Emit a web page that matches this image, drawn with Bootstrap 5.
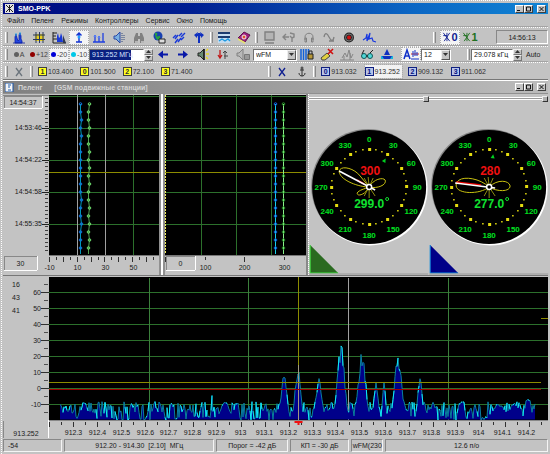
<!DOCTYPE html>
<html lang="ru">
<head>
<meta charset="utf-8">
<meta name="viewport" content="width=device-width, initial-scale=1">
<title>SMO-PPK</title>
<link rel="stylesheet" href="https://cdn.jsdelivr.net/npm/bootstrap@5.3.0/dist/css/bootstrap.min.css">
<style>
  body { font: 7px/9px "Liberation Sans", Arial, sans-serif; background: #c3c3c3; color: #202020; }
  .app { min-height: 100vh; padding: 3px 2px 2px 3px; background: #c3c3c3; position: relative; }
  .app::before { content: ""; position: absolute; inset: 0 0 0 1px; border-left: 1px dotted #fff; border-top: 1px dotted #fff; pointer-events: none; }
  .title { height: 11px; background: linear-gradient(90deg, #000a80 0%, #001f92 35%, #0b66c4 75%, #1084d4 100%); color: #fff; font-weight: 700; padding: 0 2px; }
  .child-title { height: 14px; background: linear-gradient(90deg, #808080, #bcbcbc); color: #d4d4d4; font-weight: 700; border-top: 1px solid #fff; border-bottom: 1px solid #909090; padding: 0 2px; }
  .wbtn { width: 9px; height: 8px; padding: 0; border: 1px solid; border-color: #fff #404040 #404040 #fff; background: #c3c3c3; display: flex; }
  .wbtn svg { width: 100%; height: 100%; }
  .menu { height: 13px; padding-left: 4px; gap: 7px; }
  .menu a { color: #202020; text-decoration: none; }
  .bar { border-top: 1px dotted #fff; box-shadow: 0 -1px #a4a4a4; padding-left: 1px; }
  .bar-a { height: 19px; } .bar-b { height: 16px; } .bar-c { height: 18px; border-bottom: 1px solid #777; }
  .grip { width: 3px; height: 11px; border-left: 1px solid #fff; border-right: 1px solid #888; margin: 0 1px; flex: none; }
  .tool { width: 20px; height: 15px; padding: 0; border: 0; background: none; flex: none; display: flex; align-items: center; justify-content: center; }
  .tool svg { width: 16px; height: 13px; }
  .pressed { background: #f4f4f4; border: 1px dotted #aaa; }
  .clock { width: 52px; height: 14px; border: 1px solid; border-color: #888 #fff #fff #888; }
  .att { width: 20px; height: 13px; gap: 1px; color: #444; flex: none; justify-content: center; }
  .att input { appearance: none; width: 5px; height: 5px; border-radius: 50%; margin: 0; flex: none; background: #606060; }
  .att .c-red { background: #900000; } .att .c-blue { background: #0000d8; } .att .c-cyan { background: #00c8e8; }
  .field { height: 12px; padding: 0 2px; border: 1px solid; border-color: #707070 #fff #fff #707070; background: #fff; color: #202020; font: inherit; border-radius: 0; min-width: 0; }
  .field.size { width: 30px; } .field.bw { width: 42px; } .auto { width: 26px; }
  .freq { width: 55px; background: linear-gradient(90deg, #0a2080 41px, #fff 41px); color: #d8e4ff; }
  .spin { width: 9px; height: 12px; flex: none; }
  .spin button { height: 6px; padding: 0; border: 1px solid; border-color: #eee #777 #777 #eee; background: #c3c3c3; display: flex; align-items: center; justify-content: center; }
  .spin svg { width: 5px; height: 3px; }
  .combo { width: 44px; appearance: none; background: #fff; }
  .combo-wrap { position: relative; }
  .combo-wrap .spin { position: absolute; right: 1px; top: 1px; pointer-events: none; height: 10px; background: #c3c3c3; border: 1px solid; border-color: #eee #555 #555 #eee; display: flex; align-items: center; justify-content: center; }
  .preset { border: 0; padding: 0 2px 0 0; height: 13px; color: #303030; background: none; gap: 1px; display: flex; align-items: center; flex: none; }
  .preset b { width: 9px; height: 9px; line-height: 7px; border: 1px solid #404040; text-align: center; background: #ffff20; }
  .preset.blue b { border-color: #102080; background: #b8c4e8; color: #001080; }
  .preset.on { background: #f2f2f2; outline: 1px dotted #aaa; }
  .slots { gap: 5px; } .slots-b { gap: 6px; }
  .right-bank { padding-right: 60px; }
  .tool .df-ico { width: 9px; height: 12px; flex: none; }
  .fs-df { font-size: 11px; }
  .text-df0 { color: #102090; } .text-df1 { color: #207020; }
  .work { flex: 1 1 0; }
  .upper { flex: 182 1 0; min-height: 182px; border-bottom: 1px solid #777; }
  .lower { flex: 162 1 0; min-height: 162px; }
  .scale { width: 46px; flex: none; }
  .plot { min-width: 0; flex-basis: 0; flex-shrink: 1; }
  .plot svg, .scale svg { display: block; width: 100%; height: 100%; overflow: visible; }
  .g-deg { flex-grow: 111; } .g-az { flex-grow: 142; } .g-dial { flex-grow: 240; }
  .split { width: 6px; flex: none; border-left: 2px solid #909090; border-right: 2px solid #909090; background: #fff; }
  .split-thin { width: 3px; flex: none; border-left: 2px solid #888; border-right: 1px dotted #fff; }
  .level { appearance: none; display: block; width: 100%; height: 9px; margin: 0; background: none; }
  .level::-webkit-slider-runnable-track { height: 3px; border-top: 1px solid #fff; border-bottom: 1px solid #fff; background: #999; }
  .level::-webkit-slider-thumb { appearance: none; width: 6px; height: 6px; margin-top: -2px; background: #b0b0b0; border: 1px solid; border-color: #eee #333 #333 #eee; }
  .dial { display: block; width: 100%; flex: 1 1 0; min-height: 0; }
  .status { height: 14px; gap: 2px; padding-top: 1px; }
  .status > div { border: 1px solid; border-color: #888 #f4f4f4 #f4f4f4 #888; flex-basis: 0; min-width: 0; text-align: center; overflow: hidden; white-space: nowrap; line-height: 11px; }
  .s-a { flex-grow: 55; } .s-b { flex-grow: 153; } .s-c { flex-grow: 72; } .s-d { flex-grow: 59; } .s-e { flex-grow: 31; } .s-f { flex-grow: 166; }
</style>
<script src="https://cdn.jsdelivr.net/npm/bootstrap@5.3.0/dist/js/bootstrap.bundle.min.js"></script>
</head>
<body>
<svg class="d-none" aria-hidden="true">
  <symbol id="i-spec" viewBox="0 0 16 13"><path d="M2 12h12M4 11V6l1-3 1 4 1 3 1-1V4l1-2 1 3v3l1 2v2H4z" fill="#2448e0" stroke="#0a20a8" stroke-width=".8"/><path d="M5 2v3M9 1v3" stroke="#28b0e8"/></symbol>
  <symbol id="i-grid" viewBox="0 0 16 13"><path d="M4 3h9v7H4z" fill="#e8d020"/><path d="M2 4h12M2 8.500h12M5 1v11M8.500 1v11M12 1v11" stroke="#283860"/></symbol>
  <symbol id="i-bars" viewBox="0 0 16 13"><path d="M2 1v11h13M2 2h4M2 5h3M2 8h4" stroke="#222" fill="none"/><path d="M6 11V5l1-3 1 5 1-1 1-4 1 3 1 6z" fill="#1838d8"/><path d="M12 12V4l3 8z" fill="#303850"/></symbol>
  <symbol id="i-up" viewBox="0 0 16 13"><path d="M8 2v9M5 11h6M5.500 4.500L8 2l2.500 2.500" stroke="#1030d0" stroke-width="1.400" fill="none"/><circle cx="8" cy="6" r="1.500" fill="#20a0ff"/></symbol>
  <symbol id="i-peaks" viewBox="0 0 16 13"><path d="M2 11h12M4 11V6M8 11V7M12 11V2" stroke="#2040e0" stroke-width="1.300"/><path d="M3 6l1-2 1 2M7 7l1-2 1 2" stroke="#3868ff" fill="none"/></symbol>
  <symbol id="i-spk" viewBox="0 0 16 13"><path d="M3 5h2l4-4v11L5 8H3z" fill="#7ab0e0" stroke="#2848a8"/><path d="M11 2v9M13 4v5" stroke="#304878" stroke-dasharray="1 1" fill="none"/></symbol>
  <symbol id="i-find" viewBox="0 0 16 13"><path d="M3 12V7l2-5h2v3h2V2h2l2 5v5H9V8H7v4z" fill="#808080"/><path d="M4 11h3M10 11h3" stroke="#eee"/></symbol>
  <symbol id="i-globe" viewBox="0 0 16 13"><circle cx="7" cy="5" r="4.500" fill="#1840b0"/><path d="M4 2c2-1 3 1 2 2s0 2 2 1 1 4-1 4-3-4-3-7z" fill="#28a040"/><path d="M8 8h6v4H8z" fill="#ddd" stroke="#222"/></symbol>
  <symbol id="i-wave" viewBox="0 0 16 13"><path d="M2 7l3-3M4 8l3-4M8 5l3-3M10 6l4-4M4 12l3-4M7 11l3-4M10 9l3-3" stroke="#1838d8" stroke-width="1.400" fill="none"/></symbol>
  <symbol id="i-ant" viewBox="0 0 16 13"><path d="M8 12V2M4 4h8" stroke="#1030c0" stroke-width="2" fill="none"/><path d="M7 1L3 4l3 3M9 1l4 3-3 3" fill="#1030c0"/></symbol>
  <symbol id="i-panel" viewBox="0 0 16 13"><path d="M2 1h12v11H2z" fill="#c4dcf0"/><path d="M2 2h12M2 6h12" stroke="#1c3c70" stroke-width="2"/><path d="M3 10l3-2 3 2 3-2 2 2" stroke="#209ae0" stroke-width="1.400" fill="none"/></symbol>
  <symbol id="i-book" viewBox="0 0 16 13"><path d="M2 7l6-6 6 3-5 7z" fill="#a02080" stroke="#601050"/><path d="M2 7l7 4v2L2 9z" fill="#e8e070"/><circle cx="8" cy="6" r="2" fill="#e05030" stroke="#eee"/></symbol>
  <symbol id="i-mon" viewBox="0 0 16 13"><path d="M4 1h9v8H4zM4 12h9" fill="#b4b4b4" stroke="#808080" stroke-width="1.400"/></symbol>
  <symbol id="i-back" viewBox="0 0 16 13"><path d="M2 6h6M5 3L2 6l3 3M9 2l4 1v3l-2 1v4M9 5l2 2" stroke="#858585" stroke-width="1.400" fill="none"/></symbol>
  <symbol id="i-head" viewBox="0 0 16 13"><path d="M4 9V6c0-5 8-5 8 0v3M4 7h1.500v4H4zM10.500 7H12v4h-1.500z" stroke="#808080" fill="none"/></symbol>
  <symbol id="i-sine" viewBox="0 0 16 13"><path d="M3 6c1-5 3-4 5 0s4 5 5 0M8 10h5" stroke="#808080" stroke-width="1.300" fill="none"/></symbol>
  <symbol id="i-rec" viewBox="0 0 16 13"><circle cx="8" cy="6.500" r="5" fill="#282828"/><circle cx="8" cy="6.500" r="3.500" fill="none" stroke="#777"/><circle cx="8" cy="6.500" r="2" fill="#d01010"/></symbol>
  <symbol id="i-pulse" viewBox="0 0 16 13"><path d="M2 9l3-2 1-4v7l3-8-1 6 3-1 1 3 3 1" stroke="#1838e0" stroke-width="1.200" fill="none"/></symbol>
  <symbol id="i-left" viewBox="0 0 16 13"><path d="M3 6.500l5-4v3h5v2H8v3z" fill="#0818a8"/></symbol>
  <symbol id="i-right" viewBox="0 0 16 13"><path d="M13 6.500l-5-4v3H3v2h5v3z" fill="#0818a8"/></symbol>
  <symbol id="i-spk2" viewBox="0 0 16 13"><path d="M3 5h2l4-4v11L5 8H3z" fill="#688870" stroke="#222"/><path d="M9 1v11" stroke="#111" stroke-width="1.300"/><path d="M11 3l2-2M11 6h3M11 9l2 2" stroke="#e8d820" stroke-width="1.300"/></symbol>
  <symbol id="i-tune" viewBox="0 0 16 13"><path d="M5 2v8M3 7l2 3 2-3" stroke="#c01818" stroke-width="1.300" fill="none"/><path d="M10 11V3M8 5l2-2 2 2M9 8h4" stroke="#444" fill="none"/></symbol>
  <symbol id="i-mute" viewBox="0 0 16 13"><path d="M2 5h2l4-4v11L4 8H2z" fill="#b8b8b8" stroke="#808080"/><path d="M9.500 6.500h5v5h-5z" fill="#999" stroke="#777"/></symbol>
  <symbol id="i-lock" viewBox="0 0 16 13"><path d="M2 1v11M4.500 1v11M7 1v11M9.500 1v5" stroke="#1060d8" stroke-width="1.500"/><path d="M9 6h5v5H9z" fill="#b89838" stroke="#222"/><path d="M10 6V3h3v3" fill="none" stroke="#222"/></symbol>
  <symbol id="i-clear" viewBox="0 0 16 13"><path d="M2 10l6-5 3 3-5 4H3z" fill="#e0d040" stroke="#444"/><path d="M9 1l5 5M14 1L9 6" stroke="#d01010" stroke-width="1.600"/></symbol>
  <symbol id="i-gray" viewBox="0 0 16 13"><path d="M1 12h14M3 10l3-5 2 4 2-7 2 8 2-4M5 12V8M11 12V5" stroke="#858585" fill="none"/></symbol>
  <symbol id="i-glass" viewBox="0 0 16 13"><circle cx="5" cy="8" r="2.500" fill="#50d8d8" stroke="#105858"/><circle cx="11" cy="8" r="2.500" fill="#50d8d8" stroke="#105858"/><path d="M3 6l2-4M11 5l3-3M7 8h2" stroke="#222"/></symbol>
  <symbol id="i-level" viewBox="0 0 16 13"><path d="M2 8h12v3H2z" fill="#18b8d8"/><path d="M8 1l3 6H5zM3 8h10l-2 3H5z" fill="#1030c0"/></symbol>
  <symbol id="i-aa" viewBox="0 0 16 13"><path d="M1 11l3-9 3 9M2 8h4" stroke="#1030c8" stroke-width="1.500" fill="none"/><path d="M8 6h8" stroke="#d02020"/><path d="M10 9V3M12 8V2M14 8V4M8 11h8" stroke="#1030c8"/></symbol>
  <symbol id="i-x" viewBox="0 0 16 13"><path d="M5 3l6 8M11 3l-6 8" stroke="currentColor" stroke-width="1.300"/></symbol>
  <symbol id="i-anchor" viewBox="0 0 16 13"><path d="M8 4v7M5 8c0 4 6 4 6 0M6 5h4" stroke="#303030" fill="none"/><circle cx="8" cy="3" r="1" fill="none" stroke="#303030"/></symbol>
  <symbol id="i-df" viewBox="0 0 9 13"><path d="M1 2l7 9M8 2L2 11M1 5h4M5 2v9" stroke="currentColor" fill="none"/></symbol>
  <symbol id="i-app" viewBox="0 0 9 9"><path d="M0 0h9v9H0z" fill="#e4e4e4"/><path d="M1 1l7 7M8 1L1 8M4.500 1v7" stroke="#202020"/></symbol>
  <symbol id="i-doc" viewBox="0 0 9 9"><path d="M0 0h8v9H0z" fill="#f4f4f4" stroke="#1850a0"/><path d="M3 2h3M3 4h2M3 7h3" stroke="#2060b0"/></symbol>
  <symbol id="w-min" viewBox="0 0 7 6"><path d="M1 4.500h3" stroke="#111"/></symbol>
  <symbol id="w-max" viewBox="0 0 7 6"><path d="M1.500 1h4v4h-4z" fill="none" stroke="#111"/></symbol>
  <symbol id="w-x" viewBox="0 0 7 6"><path d="M1.500 1l4 4M5.500 1l-4 4" stroke="#111"/></symbol>
  <symbol id="t-up" viewBox="0 0 5 3"><path d="M0 3l2.500-3L5 3z" fill="#333"/></symbol>
  <symbol id="t-dn" viewBox="0 0 5 3"><path d="M0 0l2.500 3L5 0z" fill="#333"/></symbol>
</svg>

<div class="app d-flex flex-column">
  <header class="title d-flex align-items-center gap-1">
    <svg width="9" height="9"><use href="#i-app"/></svg><span class="flex-grow-1">SMO-PPK</span>
    <div class="d-flex"><button class="wbtn" aria-label="Свернуть"><svg><use href="#w-min"/></svg></button><button class="wbtn" aria-label="Развернуть"><svg><use href="#w-max"/></svg></button><button class="wbtn ms-1" aria-label="Закрыть"><svg><use href="#w-x"/></svg></button></div>
  </header>
  <nav class="menu d-flex align-items-center">
    <a href="#">Файл</a><a href="#">Пеленг</a><a href="#">Режимы</a><a href="#">Контроллеры</a><a href="#">Сервис</a><a href="#">Окно</a><a href="#">Помощь</a>
  </nav>

  <div class="bar bar-a d-flex align-items-center" role="toolbar" aria-label="Основная панель">
    <i class="grip"></i>
    <div class="d-flex" data-tools="spec grid bars up* peaks spk find globe wave ant"></div>
    <i class="grip"></i>
    <div class="d-flex" data-tools="panel book"></div>
    <i class="grip"></i>
    <div class="d-flex" data-tools="mon back head sine rec pulse"></div>
    <div class="d-flex ms-auto align-items-center">
      <i class="grip me-1"></i>
      <button class="tool pressed fs-df text-df0" aria-label="Пеленгатор 0"><svg class="df-ico"><use href="#i-df"/></svg><b>0</b></button>
      <button class="tool fs-df text-df1" aria-label="Пеленгатор 1"><svg class="df-ico"><use href="#i-df"/></svg><b>1</b></button>
    </div>
    <div class="clock ms-3 d-flex align-items-center justify-content-center"><time>14:56:13</time></div>
  </div>

  <div class="bar bar-b d-flex align-items-center" role="toolbar" aria-label="Приёмник">
    <i class="grip"></i>
    <label class="att d-flex align-items-center"><input type="checkbox">A</label>
    <label class="att d-flex align-items-center"><input type="checkbox" class="c-red">+12</label>
    <label class="att pressed d-flex align-items-center"><input type="checkbox" class="c-blue" checked>-20</label>
    <label class="att pressed d-flex align-items-center"><input type="checkbox" class="c-cyan" checked>-10</label>
    <input class="field freq" aria-label="Частота" value="913.252 МГц">
    <div class="spin d-flex flex-column"><button aria-label="Больше"><svg><use href="#t-up"/></svg></button><button aria-label="Меньше"><svg><use href="#t-dn"/></svg></button></div>
    <div class="d-flex" data-tools="left right spk2 tune mute"></div>
    <div class="combo-wrap"><select class="field combo" aria-label="Демодулятор"><option>wFM</option></select><span class="spin"><svg><use href="#t-dn"/></svg></span></div>
    <div class="d-flex" data-tools="lock clear gray glass level"></div>
    <div class="d-flex ms-1" data-tools="aa*"></div>
    <div class="combo-wrap"><input class="field size" aria-label="Усреднение" value="12"><span class="spin"><svg><use href="#t-dn"/></svg></span></div>
    <i class="grip ms-auto"></i>
    <input class="field bw" aria-label="Полоса" value="29.078 кГц">
    <div class="spin d-flex flex-column"><button aria-label="Шире"><svg><use href="#t-up"/></svg></button><button aria-label="Уже"><svg><use href="#t-dn"/></svg></button></div>
    <span class="auto ps-1">Auto</span>
  </div>

  <div class="bar bar-c d-flex align-items-center" role="toolbar" aria-label="Каналы">
    <i class="grip"></i>
    <button class="tool text-secondary" aria-label="Удалить"><svg><use href="#i-x"/></svg></button>
    <i class="grip"></i>
    <div class="slots d-flex ms-1">
      <button class="preset"><b>1</b>103.400</button><button class="preset"><b>0</b>101.500</button><button class="preset"><b>2</b>72.100</button><button class="preset"><b>3</b>71.400</button>
    </div>
    <div class="right-bank d-flex align-items-center ms-auto">
      <i class="grip"></i>
      <button class="tool text-df0" aria-label="Сброс"><svg><use href="#i-x"/></svg></button>
      <button class="tool" aria-label="Захват"><svg><use href="#i-anchor"/></svg></button>
      <i class="grip"></i>
      <div class="slots-b d-flex ms-1">
        <button class="preset blue"><b>0</b>913.032</button><button class="preset blue on"><b>1</b>913.252</button><button class="preset blue"><b>2</b>909.132</button><button class="preset blue"><b>3</b>911.062</button>
      </div>
    </div>
  </div>

  <div class="child-title d-flex align-items-center gap-1">
    <svg width="9" height="9"><use href="#i-doc"/></svg><span>Пеленг</span><span class="flex-grow-1 ps-2">[GSM подвижные станции]</span>
    <div class="d-flex"><button class="wbtn" aria-label="Свернуть окно"><svg><use href="#w-min"/></svg></button><button class="wbtn" aria-label="Развернуть окно"><svg><use href="#w-max"/></svg></button><button class="wbtn ms-1" aria-label="Закрыть окно"><svg><use href="#w-x"/></svg></button></div>
  </div>

  <main class="work d-flex flex-column">
    <section class="upper d-flex">
      <div class="scale" id="timeScale"></div>
      <div class="plot g-deg" id="elev"></div>
      <div class="split"></div>
      <div class="plot g-az" id="azim"></div>
      <div class="split-thin"></div>
      <div class="plot g-dial d-flex">
        <div class="plot flex-grow-1 d-flex flex-column"><input type="range" class="level" aria-label="Порог 1" value="100"><svg class="dial" id="dialA" viewBox="0 0 119 172" preserveAspectRatio="xMidYMid meet"></svg></div>
        <div class="plot flex-grow-1 d-flex flex-column"><input type="range" class="level" aria-label="Порог 2" value="100"><svg class="dial" id="dialB" viewBox="0 0 119 172" preserveAspectRatio="xMidYMid meet"></svg></div>
      </div>
    </section>
    <section class="lower d-flex">
      <div class="scale" id="levelScale"></div>
      <div class="plot flex-grow-1" id="spectrum"></div>
    </section>
  </main>

  <footer class="status d-flex">
    <div class="s-a text-start ps-1">-54</div><div class="s-b">912.20 - 914.30&nbsp; [2.10]&nbsp; МГц</div><div class="s-c">Порог = -42 дБ</div><div class="s-d">КП = -30 дБ</div><div class="s-e">wFM(230</div><div class="s-f">12.6 п/о</div>
  </footer>
</div>

<script>
const GREEN = '#2c702c', OLIVE = '#8c8c00', GRAY = '#a0a0a0';
document.querySelectorAll('[data-tools]').forEach(box => {
  box.innerHTML = box.dataset.tools.split(' ').map(n => {
    const on = n.endsWith('*'), id = n.replace('*', '');
    return `<button class="tool${on ? ' pressed' : ''}" aria-label="${id}"><svg><use href="#i-${id}"/></svg></button>`;
  }).join('');
});
const line = (x1, y1, x2, y2, c, extra = '') => `<path d="M${x1} ${y1}L${x2} ${y2}" stroke="${c}" fill="none" shape-rendering="crispEdges" ${extra}/>`;
const rect = (x, y, w, h, c, extra = '') => `<rect x="${x}" y="${y}" width="${w}" height="${h}" fill="${c}" ${extra}/>`;
const text = (x, y, s, anchor = 'middle', extra = '') => `<text x="${x}" y="${y}" text-anchor="${anchor}" font-size="7" fill="#202020" ${extra}>${s}</text>`;
const box = (x, y, w, h, s) => rect(x, y, w, h, '#c6c6c6') + line(x, y + h, x + w, y + h, '#fff') + line(x + w, y, x + w, y + h, '#fff') + line(x, y, x + w, y, '#888') + line(x, y, x, y + h, '#888') + text(x + w / 2, y + h / 2 + 3, s);
const put = (id, body) => { document.getElementById(id).innerHTML = `<svg role="img" aria-label="${id}">${body}</svg>`; };
const size = id => { const e = document.getElementById(id); return [e.clientWidth, e.clientHeight]; };
function rng(seed) { return () => (seed = (seed * 1103515245 + 12345) % 2147483648) / 2147483648; }

function trace(x, h, c, dot, wobble, seed) {
  const r = rng(seed), pts = [];
  for (let y = 10; y <= h; y += 8) pts.push([x + (r() > .6 ? wobble : 0), y]);
  return `<polyline points="${pts.join(' ')} ${x},${h}" fill="none" stroke="${c}"/>` +
    pts.map(p => `<circle cx="${p[0]}" cy="${p[1]}" r="1.300" fill="none" stroke="${dot}"/>`).join('');
}
function drawTime() {
  const [w, h] = size('timeScale'), ph = h - 21;
  let s = line(0, 1, w, 1, '#888') + box(1, 2, 38, 12, '14:54:37');
  for (let y = 4; y < ph; y += 4) s += line(w - 4, y, w - 1, y, '#404040');
  ['14:53:46', '14:54:22', '14:54:58', '14:55:35'].forEach((t, i) => {
    const y = Math.round(ph * (i + 1) / 5) + 2;
    s += line(w - 7, y, w, y, '#202020') + text(w - 7, y + 2, t, 'end');
  });
  put('timeScale', s + box(1, h - 19, 33, 14, '30'));
}
function drawTrack(id, opt) {
  const [w, h] = size(id), ph = h - 21, X = v => Math.round(v / opt.w * w) + .5;
  let s = rect(0, 1, w, ph, '#000');
  for (let i = 0; i < 5; i++) { const y = Math.round(ph * i / 5) + 2; s += line(0, y, w, y, GREEN); }
  opt.v.forEach(([x, c]) => { s += line(X(x), 1, X(x), ph + 1, c); });
  s += line(0, 78, w, 78, OLIVE) + opt.extra(X, ph);
  s += line(0, ph + 1, w, ph + 1, '#777');
  for (let x = 0; x <= opt.w; x += opt.step) s += line(X(x), ph + 3, X(x), ph + (Math.round(x / opt.step) % 2 ? 6 : 8), '#303030');
  opt.labels.forEach(([x, t]) => { s += text(X(x), ph + 16, t); });
  put(id, s + (opt.box ? box(1, ph + 2, 29, 14, '0') : ''));
}
function dial(id, o) {
  let s = `<circle cx="61" cy="85" r="57.500" fill="#fff"/><circle cx="59" cy="83" r="57" fill="#888"/><g transform="translate(60 84)"><circle r="57" fill="#000"/>`;
  for (let a = 0; a < 360; a += 10) {
    const big = a % 30 === 0, q = a * Math.PI / 180, k = big ? 3 : 1.500;
    s += rect(Math.round(37.500 * Math.sin(q) - k / 2), Math.round(-37.500 * Math.cos(q) - k / 2), k, k, '#e4dc10');
    if (big) s += `<text x="${Math.round(48 * Math.sin(q))}" y="${Math.round(-48 * Math.cos(q)) + 3}" text-anchor="middle" font-size="8" font-weight="700" fill="#00e020">${a}</text>`;
  }
  s += `<g fill="none" stroke="#c8c010"><path d="${o.lobes}"/><path d="M0 0L-5 -9M0 0L-1 -10M0 0L4 -9M0 0L6 9M0 0L0 11M0 0L-5 9" stroke="#8c8c10"/></g>`;
  s += `<path d="${o.red}" stroke="#f00000" stroke-width="1.500"/><path d="${o.needle}" stroke="#fff" stroke-width="1.600"/><circle r="2.500" fill="#000" stroke="#fff" stroke-width="1.500"/>`;
  s += `<path d="M0 -33l2 4h-4z" fill="#00d020" transform="rotate(${o.mark})"/>`;
  s += `<text x="1" y="-12" text-anchor="middle" font-size="12" font-weight="700" fill="#f01010">${o.top}</text><text x="0" y="21" text-anchor="middle" font-size="12" font-weight="700" fill="#10e030">${o.val}</text><circle cx="18" cy="12" r="1.500" fill="none" stroke="#10e030"/></g>`;
  s += `<path d="M1 142L29 170H1z" fill="${o.fill}"/><path d="M1 142V170H29" fill="none" stroke="${o.edge}"/><path d="M0 171H119" stroke="#999"/>`;
  document.getElementById(id).innerHTML = s;
}
function drawLevel() {
  const [w, h] = size('levelScale'), ph = h - 18;
  let s = '';
  for (let i = 0; i < 9; i++) {
    const y = Math.round((16 + i * 16) / 144 * ph);
    if (i < 8) s += line(w - 8, y, w, y, '#303030') + text(w - 8, y + 3, 60 - i * 10, 'end');
    s += line(w - 5, y - 8, w - 1, y - 8, '#505050');
  }
  ['16', '43', '41'].forEach((t, i) => { s += text(13, 11 + i * 13, t); });
  put('levelScale', s + line(0, ph + 1, 0, h, '#888') + line(w - 1, ph, w - 1, h, '#fff') + text(23, h - 2, '913.252'));
}
function drawSpectrum() {
  const [w, h] = size('spectrum'), ph = h - 18, K = w / 499, X = v => Math.round(v * K) + .5, Y = v => Math.round(v / 144 * ph) + .5;
  let s = rect(0, 1, w, ph - 1, '#000');
  for (let i = 0; i < 8; i++) s += line(0, Y(16 + i * 16), w, Y(16 + i * 16), GREEN);
  [[100, '#3c803c'], [199, '#3c803c'], [399, '#3c803c'], [299, GRAY]].forEach(([x, c]) => { s += line(X(x), 2, X(x), ph, c); });
  // carrier peaks: position, height, half-width
  const peaks = [[35, 19, 5], [111, 14, 3], [163, 30, 1], [176, 20, 6], [235, 49, 4], [249, 54, 4], [270, 42, 4], [292, 77, 5], [313, 69, 5], [327, 40, 3], [335, 44, 2], [349, 66, 5], [371, 45, 3], [450, 17, 9], [465, 18, 8], [479, 26, 4]];
  const r = rng(77), pts = [];
  for (let x = 11; x <= 486; x++) {
    let v = r() > .28 ? 7 + r() * 12 : r() * 5;
    for (const [p, a, b] of peaks) { const d = Math.abs(x - p) / b; if (d < 2) v = Math.max(v, a * Math.exp(-d * d) * (.78 + .22 * r())); }
    pts.push([x * K, Y(144) - v / 144 * ph]);
  }
  const base = ph - .5;
  s += `<path d="M${pts[0][0]} ${base}L${pts.map(p => p.join(' ')).join('L')}L${pts[pts.length - 1][0]} ${base}z" fill="#00008a"/>`;
  s += `<polyline points="${pts.join(' ')}" fill="none" stroke="#0880a0"/>`;
  let cy = '';
  for (let i = 1; i < pts.length; i++) if (r() > .7) cy += `M${pts[i - 1].join(' ')}L${pts[i].join(' ')}`;
  s += `<path d="${cy}" stroke="#10e8f8" fill="none"/>`;
  s += line(X(249), 1, X(249), Y(88), OLIVE) + line(X(249), Y(88), X(249), ph, '#a09880');
  s += line(0, Y(106), X(491), Y(106), OLIVE) + line(0, Y(113), X(491), Y(113), '#a00000') + line(X(491), Y(42), w, Y(42), OLIVE);
  s += rect(0, ph, w, 18, '#c3c3c3') + line(0, ph, w, ph, '#888');
  for (let i = 0; i < 42; i++) s += line(X(12 * i), ph + 2, X(12 * i), ph + (i % 2 ? 5 : 7), '#303030');
  for (let i = 0; i < 20; i++) s += text(X(24 + i * 23.850), h - 3, String((9123 + i) / 10));
  s += rect(X(249) - 4, ph + 1, 8, 2, '#f01010') + rect(X(249) - 1, ph + 3, 2, 2, '#f01010');
  put('spectrum', s);
}
function draw() {
  drawTime();
  drawTrack('elev', { w: 111, step: 7, v: [[28, GRAY], [57, GRAY], [85, GREEN]], labels: [[0, '-10'], [28, '10'], [57, '30'], [85, '50']],
    extra: (X, ph) => trace(X(31), ph, '#0098b8', '#1070e0', 1, 5) + trace(X(39), ph, '#50a050', '#70e070', 1, 9) });
  drawTrack('azim', { w: 142, step: 40, box: true, v: [[36, GREEN], [72, GREEN], [107, GREEN]], labels: [[40, '100'], [80, '200'], [120, '300']],
    extra: (X, ph) => line(.5, 1, .5, ph, '#f4f060', 'stroke-dasharray="2 1"') + trace(X(111), ph, '#18d0e8', '#1060e0', 0, 5) + trace(X(119), ph, '#88f088', '#289028', 0, 9) });
  drawLevel();
  drawSpectrum();
}
dial('dialA', { top: '300', val: '299.0', mark: 30, fill: '#2a6a20', edge: '#40e040', red: 'M-12 -7L-5 -3', needle: 'M-30 -16L6 3',
  lobes: 'M0 0C-10 0 -28 -6 -30 -15C-30 -22 -16 -20 -9 -11ZM0 0C4 -8 14 -10 16 -7C18 -2 8 2 0 0M0 0C-4 8 -12 10 -12 6C-10 3 -5 2 0 0' });
dial('dialB', { top: '280', val: '277.0', mark: 7, fill: '#000088', edge: '#1090e0', red: 'M-33 -5L-8 -2', needle: 'M-34 -4L6 1',
  lobes: 'M0 0C-10 8 -32 7 -33 -1C-34 -12 -12 -11 0 0M0 0C8 -8 20 -7 21 -1C21 5 8 5 0 0' });
draw();
addEventListener('resize', draw);
</script>
</body>
</html>
